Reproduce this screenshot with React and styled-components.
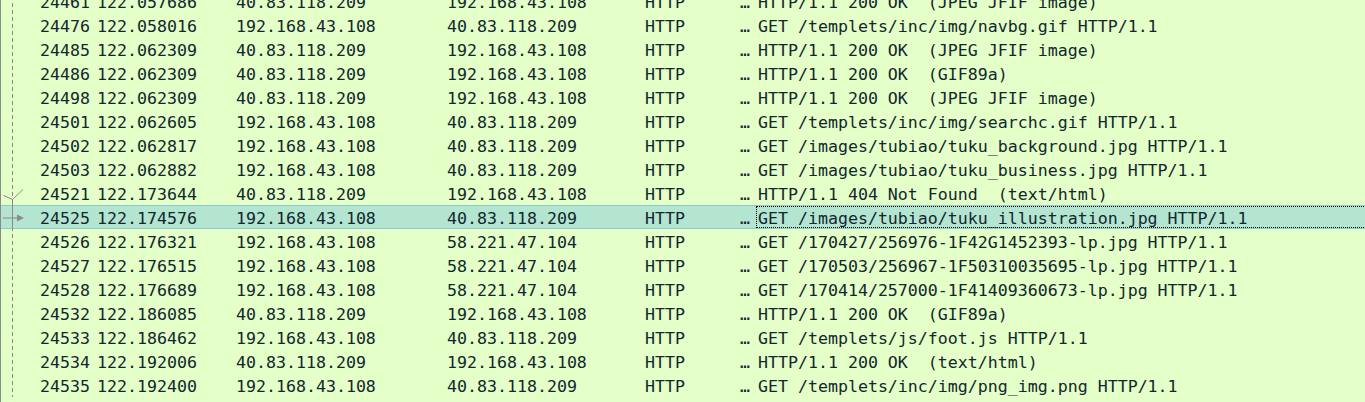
import React from "react";
import styled, { createGlobalStyle } from "styled-components";

const Global = createGlobalStyle`
  html, body { margin: 0; padding: 0; background: #e4ffc7; }
  body { overflow: hidden; }
`;

const Frame = styled.div`
  height: 402px;
  width: 1365px;
  overflow: hidden;
  border-left: 1px solid #888b8b;
  box-sizing: border-box;
  background: #e4ffc7;
`;

const List = styled.div`
  position: relative;
  margin-top: -11px;
  width: 1500px;
  background-image: repeating-linear-gradient(
    to bottom,
    #8a8a8a 0,
    #8a8a8a 4px,
    transparent 4px,
    transparent 7px
  );
  background-size: 1px 100%;
  background-repeat: no-repeat;
  background-position: 11px 0;
`;

const Row = styled.div`
  position: relative;
  display: grid;
  grid-template-columns: 92px 140px 211px 198px 96px 18px 1fr;
  height: 24px;
  box-sizing: border-box;
  font-family: "DejaVu Sans Mono", "Liberation Mono", monospace;
  font-size: 16.6px;
  line-height: 22px;
  color: #12272e;
  white-space: pre;
  background: ${(p) => (p.$selected ? "#b3e5d1" : "transparent")};
  border: 1px solid ${(p) => (p.$selected ? "#8cc8d5" : "transparent")};
  border-left-width: 0;
`;

const Cell = styled.div`
  height: 22px;
  box-sizing: border-box;
  padding-top: 2px;
  text-align: ${(p) => (p.$right ? "right" : "left")};
  padding-left: ${(p) => (p.$right ? 0 : p.$pad ?? 3)}px;
  padding-right: ${(p) => (p.$right ? 3 : 0)}px;
`;

const InfoCell = styled.div`
  padding-left: 1px;
  padding-top: 1px;
  box-sizing: border-box;
  height: 22px;
  border: 1px dotted ${(p) => (p.$focused ? "#000" : "transparent")};
  border-right: none;
  line-height: 22px;
`;

const Indicator = styled.svg`
  position: absolute;
  left: -1px;
  top: -1px;
  width: 30px;
  height: 24px;
  pointer-events: none;
`;

const rows = [
  ["24461", "122.057686", "40.83.118.209", "192.168.43.108", "HTTP", "HTTP/1.1 200 OK  (JPEG JFIF image)"],
  ["24476", "122.058016", "192.168.43.108", "40.83.118.209", "HTTP", "GET /templets/inc/img/navbg.gif HTTP/1.1"],
  ["24485", "122.062309", "40.83.118.209", "192.168.43.108", "HTTP", "HTTP/1.1 200 OK  (JPEG JFIF image)"],
  ["24486", "122.062309", "40.83.118.209", "192.168.43.108", "HTTP", "HTTP/1.1 200 OK  (GIF89a)"],
  ["24498", "122.062309", "40.83.118.209", "192.168.43.108", "HTTP", "HTTP/1.1 200 OK  (JPEG JFIF image)"],
  ["24501", "122.062605", "192.168.43.108", "40.83.118.209", "HTTP", "GET /templets/inc/img/searchc.gif HTTP/1.1"],
  ["24502", "122.062817", "192.168.43.108", "40.83.118.209", "HTTP", "GET /images/tubiao/tuku_background.jpg HTTP/1.1"],
  ["24503", "122.062882", "192.168.43.108", "40.83.118.209", "HTTP", "GET /images/tubiao/tuku_business.jpg HTTP/1.1"],
  ["24521", "122.173644", "40.83.118.209", "192.168.43.108", "HTTP", "HTTP/1.1 404 Not Found  (text/html)", "response"],
  ["24525", "122.174576", "192.168.43.108", "40.83.118.209", "HTTP", "GET /images/tubiao/tuku_illustration.jpg HTTP/1.1", "selected"],
  ["24526", "122.176321", "192.168.43.108", "58.221.47.104", "HTTP", "GET /170427/256976-1F42G1452393-lp.jpg HTTP/1.1"],
  ["24527", "122.176515", "192.168.43.108", "58.221.47.104", "HTTP", "GET /170503/256967-1F50310035695-lp.jpg HTTP/1.1"],
  ["24528", "122.176689", "192.168.43.108", "58.221.47.104", "HTTP", "GET /170414/257000-1F41409360673-lp.jpg HTTP/1.1"],
  ["24532", "122.186085", "40.83.118.209", "192.168.43.108", "HTTP", "HTTP/1.1 200 OK  (GIF89a)"],
  ["24533", "122.186462", "192.168.43.108", "40.83.118.209", "HTTP", "GET /templets/js/foot.js HTTP/1.1"],
  ["24534", "122.192006", "40.83.118.209", "192.168.43.108", "HTTP", "HTTP/1.1 200 OK  (text/html)"],
  ["24535", "122.192400", "192.168.43.108", "40.83.118.209", "HTTP", "GET /templets/inc/img/png_img.png HTTP/1.1"],
];

function ResponseMark() {
  return (
    <Indicator viewBox="0 0 30 24">
      <polyline
        points="3.5,14.5 12.5,18.5 23,8.5"
        fill="none"
        stroke="#8a8a8a"
        strokeWidth="1"
      />
      <line x1="12.5" y1="18" x2="12.5" y2="24" stroke="#8a8a8a" strokeWidth="1" />
    </Indicator>
  );
}

function SelectedMark() {
  return (
    <Indicator viewBox="0 0 30 24">
      <line x1="12.5" y1="0" x2="12.5" y2="24" stroke="#8a8a8a" strokeWidth="1" />
      <line x1="3" y1="13" x2="18" y2="13" stroke="#8a8a8a" strokeWidth="1" />
      <polygon points="17,9.5 24,13 17,16.5" fill="#8a8a8a" />
    </Indicator>
  );
}

export default function App() {
  return (
    <>
      <Global />
      <Frame>
        <List>
          {rows.map((r) => {
            const selected = r[6] === "selected";
            return (
              <Row key={r[0]} $selected={selected}>
                {r[6] === "response" && <ResponseMark />}
                {selected && <SelectedMark />}
                <Cell $right>{r[0]}</Cell>
                <Cell $pad={4}>{r[1]}</Cell>
                <Cell>{r[2]}</Cell>
                <Cell>{r[3]}</Cell>
                <Cell>{r[4]}</Cell>
                <Cell $pad={2}>…</Cell>
                <InfoCell $focused={selected}>{r[5]}</InfoCell>
              </Row>
            );
          })}
        </List>
      </Frame>
    </>
  );
}
